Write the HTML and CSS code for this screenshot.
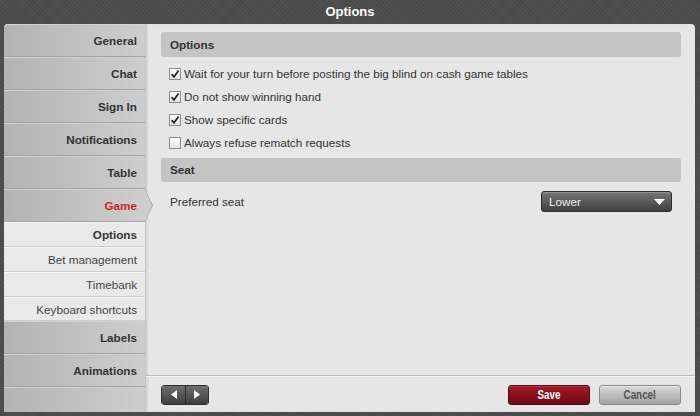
FILE: index.html
```html
<!DOCTYPE html>
<html>
<head>
<meta charset="utf-8">
<link rel="stylesheet" href="styles.css">
</head>
<body>
<div class="titlebar">Options</div>
<div class="window">
  <nav class="sidebar">
    <div class="tab">General</div>
    <div class="tab">Chat</div>
    <div class="tab">Sign In</div>
    <div class="tab">Notifications</div>
    <div class="tab">Table</div>
    <div class="tab tab-active">Game</div>
    <div class="sub sub-active">Options</div>
    <div class="sub">Bet management</div>
    <div class="sub">Timebank</div>
    <div class="sub sub-last">Keyboard shortcuts</div>
    <div class="tab">Labels</div>
    <div class="tab">Animations</div>
    <div class="tab filler"></div>
  </nav>
  <main class="content">
    <div class="panel">
      <div class="section-head">Options</div>
      <div class="check-row"><span class="cb"><svg width="10" height="10" viewBox="0 0 10 10"><path d="M1.6 5.2 L4 7.8 L8.6 1.6" fill="none" stroke="#222" stroke-width="1.7"/></svg></span>Wait for your turn before posting the big blind on cash game tables</div>
      <div class="check-row"><span class="cb"><svg width="10" height="10" viewBox="0 0 10 10"><path d="M1.6 5.2 L4 7.8 L8.6 1.6" fill="none" stroke="#222" stroke-width="1.7"/></svg></span>Do not show winning hand</div>
      <div class="check-row"><span class="cb"><svg width="10" height="10" viewBox="0 0 10 10"><path d="M1.6 5.2 L4 7.8 L8.6 1.6" fill="none" stroke="#222" stroke-width="1.7"/></svg></span>Show specific cards</div>
      <div class="check-row"><span class="cb"></span>Always refuse rematch requests</div>
      <div class="section-head seat-head">Seat</div>
      <div class="field-row">
        <span>Preferred seat</span>
        <div class="select"><span>Lower</span><svg width="11" height="6" viewBox="0 0 11 6"><path d="M0 0 H11 L5.5 6 Z" fill="#fff"/></svg></div>
      </div>
    </div>
    <footer class="footer">
      <div class="nav-btns">
        <div class="nav-btn"><svg width="6" height="9" viewBox="0 0 6 9"><path d="M6 0 V9 L0 4.5 Z" fill="#fff"/></svg></div>
        <div class="nav-btn"><svg width="6" height="9" viewBox="0 0 6 9"><path d="M0 0 V9 L6 4.5 Z" fill="#fff"/></svg></div>
      </div>
      <div class="actions">
        <div class="btn btn-save"><span class="btn-label">Save</span></div>
        <div class="btn btn-cancel"><span class="btn-label">Cancel</span></div>
      </div>
    </footer>
  </main>
</div>
</body>
</html>
```
FILE: styles.css
```css
* { box-sizing: border-box; }
html, body { margin: 0; padding: 0; }
body {
  width: 700px;
  height: 416px;
  overflow: hidden;
  background-color: #4c4c4c;
  background-image:
    repeating-linear-gradient(45deg, rgba(255,255,255,0.03) 0 1px, transparent 1px 3px),
    repeating-linear-gradient(-45deg, rgba(0,0,0,0.05) 0 1px, transparent 1px 3px);
  font-family: "Liberation Sans", Arial, sans-serif;
  font-size: 11.7px;
  color: #333;
}
.titlebar {
  height: 24px;
  line-height: 23px;
  text-align: center;
  color: #fff;
  font-weight: bold;
  font-size: 13px;
}
.window {
  margin: 0 5px 0 4px;
  height: 388px;
  display: flex;
  background: #e6e6e6;
  border-radius: 4px 4px 0 0;
}
.sidebar {
  width: 141px;
  display: flex;
  flex-direction: column;
  border-radius: 4px 0 0 0;
}
.tab {
  position: relative;
  height: 33px;
  flex: none;
  display: flex;
  align-items: center;
  justify-content: flex-end;
  padding-right: 8px;
  font-weight: bold;
  color: #333;
  background: linear-gradient(to right, #b3b3b3, #cecece);
  border-top: 1px solid #d2d2d2;
  border-bottom: 1px solid #a3a3a3;
}
.tab:first-child { border-radius: 4px 0 0 0; }
.tab-active { color: #d3222b; }
.tab-active::after {
  content: "";
  position: absolute;
  top: -1px;
  bottom: -1px;
  right: -8px;
  width: 8px;
  background: #a3a3a3;
  clip-path: polygon(0 0, 100% 50%, 0 100%);
}
.tab-active::before {
  content: "";
  position: absolute;
  top: 0;
  bottom: 0;
  right: -7px;
  width: 7px;
  z-index: 1;
  background: #cecece;
  clip-path: polygon(0 0, 100% 50%, 0 100%);
}
.filler { flex: 1; border-bottom: none; }
.sub {
  height: 25px;
  flex: none;
  display: flex;
  align-items: center;
  justify-content: flex-end;
  padding-right: 8px;
  color: #444;
  background: #e9e9e9;
  border-bottom: 1px solid #cdcdcd;
  border-top: 1px solid #f6f6f6;
}
.sub-last { height: 24px; }
.sub-active { font-weight: bold; color: #333; }
.content {
  flex: 1;
  display: flex;
  flex-direction: column;
  border-left: 1px solid #c4c4c4;
  box-shadow: inset 2px 0 2px rgba(0,0,0,0.07);
}
.panel {
  flex: 1;
  padding: 8px 14px 0 15px;
}
.section-head {
  height: 25px;
  line-height: 25px;
  padding-left: 9px;
  background: #c4c4c4;
  border-radius: 3px;
  font-weight: bold;
  color: #333;
  margin-bottom: 5px;
}
.seat-head {
  height: 24px;
  line-height: 24px;
  margin-top: 4px;
}
.check-row {
  height: 23px;
  display: flex;
  align-items: center;
  padding-left: 8px;
  color: #333;
}
.cb {
  width: 12px;
  height: 12px;
  margin-right: 3px;
  border: 1px solid #8c8c8c;
  background: linear-gradient(#ffffff, #e2e2e2);
  display: flex;
  align-items: center;
  justify-content: center;
}
.field-row {
  margin-top: 9px;
  height: 21px;
  display: flex;
  align-items: center;
  justify-content: space-between;
  padding: 0 9px;
  color: #333;
}
.select {
  width: 131px;
  height: 21px;
  display: flex;
  align-items: center;
  justify-content: space-between;
  padding: 0 6px 0 7px;
  color: #eee;
  background: linear-gradient(#767676, #3f3f3f);
  border: 1px solid #2c2c2c;
  border-radius: 3px;
  box-shadow: inset 0 1px 0 rgba(255,255,255,0.2);
}
.footer {
  height: 37px;
  flex: none;
  border-top: 1px solid #bdbdbd;
  box-shadow: inset 0 1px 0 #f4f4f4;
  display: flex;
  align-items: center;
  justify-content: space-between;
  padding: 1px 14px 0 15px;
}
.nav-btns {
  display: flex;
  height: 20px;
  border: 1px solid #2f2f2f;
  border-radius: 3px;
  overflow: hidden;
}
.nav-btn {
  width: 23px;
  display: flex;
  align-items: center;
  justify-content: center;
  background: linear-gradient(#6e6e6e, #3d3d3d);
}
.nav-btn + .nav-btn { border-left: 1px solid #2a2a2a; }
.actions { display: flex; gap: 9px; }
.btn {
  width: 82px;
  height: 20px;
  border-radius: 3px;
  display: flex;
  align-items: center;
  justify-content: center;
  font-weight: bold;
  font-size: 12px;
}
.btn-label {
  display: inline-block;
  transform: scaleX(0.82);
}
.btn-save {
  color: #fff;
  background: linear-gradient(#a51823, #6d0912);
  border: 1px solid #55070d;
  box-shadow: inset 0 1px 0 rgba(255,255,255,0.15);
}
.btn-cancel {
  color: #555;
  background: linear-gradient(#d6d6d6, #a3a3a3);
  border: 1px solid #8a8a8a;
  box-shadow: inset 0 1px 0 rgba(255,255,255,0.5);
}
```
